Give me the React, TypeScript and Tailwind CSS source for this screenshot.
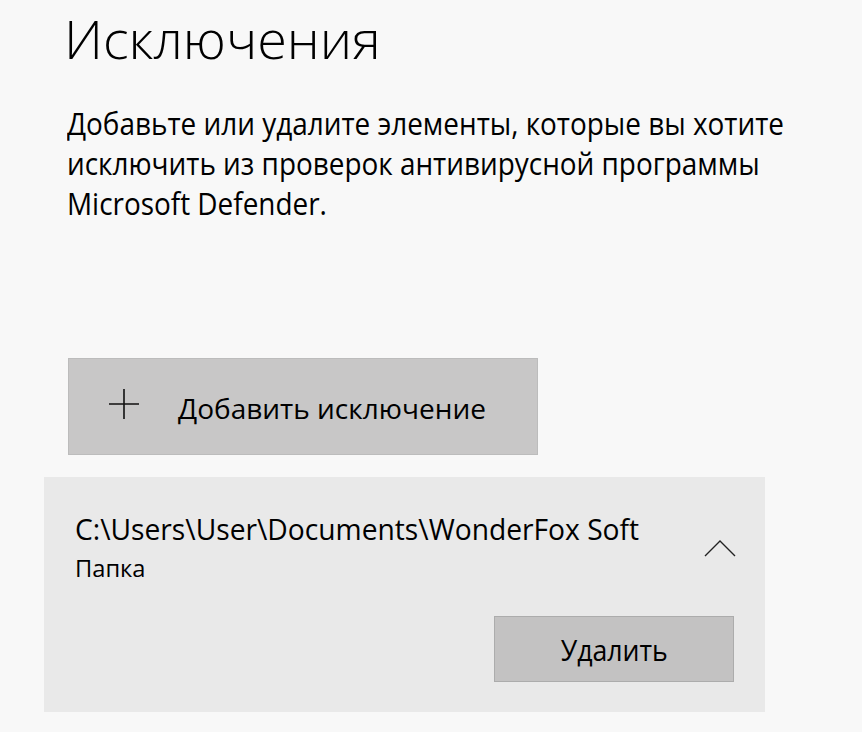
import React from "react";

const font = { fontFamily: '"Open Sans", "Noto Sans", sans-serif' };

export default function App() {
  return (
    <div className="w-[862px] h-[732px] bg-[#f8f8f8] overflow-hidden text-black" style={font}>
      <div className="pl-[64px] pt-[2px]">
        <h1 className="text-[54px] leading-[72px] font-light origin-left whitespace-nowrap">
          Исключения
        </h1>
      </div>
      <div className="pl-[67px] pt-[29px] text-[31px] leading-[40px] whitespace-nowrap">
        <p className="origin-left scale-x-[0.9]">Добавьте или удалите элементы, которые вы хотите</p>
        <p className="origin-left scale-x-[0.9]">исключить из проверок антивирусной программы</p>
        <p className="origin-left scale-x-[0.9]">Microsoft Defender.</p>
      </div>
      <div className="pl-[68px] pt-[135px]">
        <div className="w-[470px] h-[97px] bg-[#c8c7c7] border border-[#bcbcbc] flex items-center">
          <svg width="32" height="32" viewBox="0 0 32 32" className="ml-[39px] -mt-[6px]">
            <path d="M16 1V31M1 16H31" stroke="#111" strokeWidth="1.6" fill="none" />
          </svg>
          <span className="ml-[38px] mt-[2px] text-[28px] origin-left whitespace-nowrap">Добавить исключение</span>
        </div>
      </div>
      <div className="pl-[44px] pt-[22px]">
        <div className="w-[721px] h-[235px] bg-[#e9e9e9] relative">
          <div className="pl-[31px] pt-[32px]">
            <div className="text-[30px] leading-[40px] origin-left scale-x-[0.94] whitespace-nowrap">C:\Users\User\Documents\WonderFox Soft</div>
            <div className="mt-[4px] text-[23px] leading-[30px] origin-left scale-x-[1.03] whitespace-nowrap">Папка</div>
          </div>
          <svg width="32" height="18" viewBox="0 0 32 18" className="absolute left-[660px] top-[62px]">
            <path d="M1 17L16 2L31 17" stroke="#222" strokeWidth="1.4" fill="none" />
          </svg>
          <div className="absolute left-[450px] top-[139px] w-[240px] h-[66px] bg-[#c3c2c2] border border-[#acacac] flex items-center justify-center">
            <span className="text-[29px] mt-[2px] scale-x-[0.92] whitespace-nowrap">Удалить</span>
          </div>
        </div>
      </div>
    </div>
  );
}
